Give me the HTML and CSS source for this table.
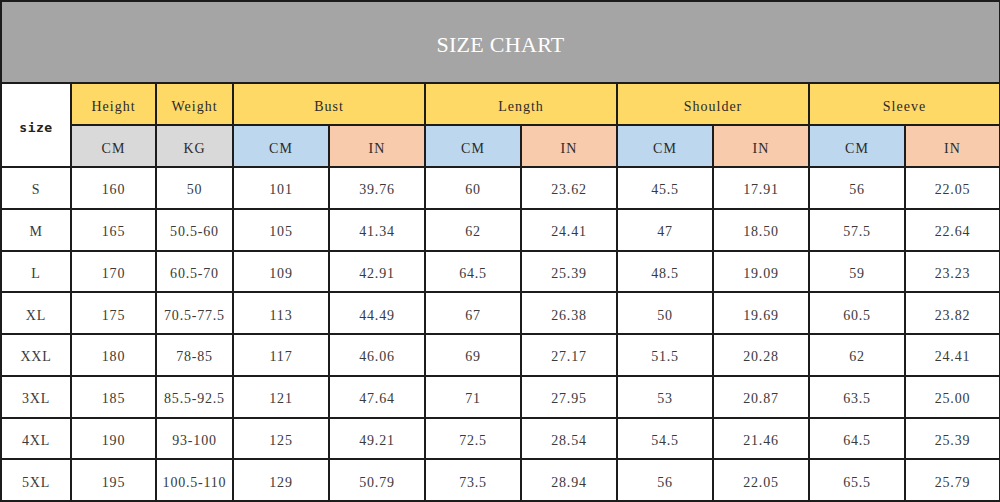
FILE: index.html
```html
<!DOCTYPE html>
<html>
<head>
<meta charset="utf-8">
<link rel="stylesheet" href="styles.css">
</head>
<body>
<div class="chart">
  <div class="title">SIZE CHART</div>

  <div class="size-head">size</div>
  <div class="h yellow">Height</div>
  <div class="h yellow">Weight</div>
  <div class="h yellow span2">Bust</div>
  <div class="h yellow span2">Length</div>
  <div class="h yellow span2">Shoulder</div>
  <div class="h yellow span2">Sleeve</div>

  <div class="h grey">CM</div>
  <div class="h grey">KG</div>
  <div class="h blue">CM</div><div class="h peach">IN</div>
  <div class="h blue">CM</div><div class="h peach">IN</div>
  <div class="h blue">CM</div><div class="h peach">IN</div>
  <div class="h blue">CM</div><div class="h peach">IN</div>

  <div class="c">S</div><div class="c">160</div><div class="c">50</div><div class="c">101</div><div class="c">39.76</div><div class="c">60</div><div class="c">23.62</div><div class="c">45.5</div><div class="c">17.91</div><div class="c">56</div><div class="c">22.05</div>
  <div class="c">M</div><div class="c">165</div><div class="c">50.5-60</div><div class="c">105</div><div class="c">41.34</div><div class="c">62</div><div class="c">24.41</div><div class="c">47</div><div class="c">18.50</div><div class="c">57.5</div><div class="c">22.64</div>
  <div class="c">L</div><div class="c">170</div><div class="c">60.5-70</div><div class="c">109</div><div class="c">42.91</div><div class="c">64.5</div><div class="c">25.39</div><div class="c">48.5</div><div class="c">19.09</div><div class="c">59</div><div class="c">23.23</div>
  <div class="c">XL</div><div class="c">175</div><div class="c">70.5-77.5</div><div class="c">113</div><div class="c">44.49</div><div class="c">67</div><div class="c">26.38</div><div class="c">50</div><div class="c">19.69</div><div class="c">60.5</div><div class="c">23.82</div>
  <div class="c">XXL</div><div class="c">180</div><div class="c">78-85</div><div class="c">117</div><div class="c">46.06</div><div class="c">69</div><div class="c">27.17</div><div class="c">51.5</div><div class="c">20.28</div><div class="c">62</div><div class="c">24.41</div>
  <div class="c">3XL</div><div class="c">185</div><div class="c">85.5-92.5</div><div class="c">121</div><div class="c">47.64</div><div class="c">71</div><div class="c">27.95</div><div class="c">53</div><div class="c">20.87</div><div class="c">63.5</div><div class="c">25.00</div>
  <div class="c">4XL</div><div class="c">190</div><div class="c">93-100</div><div class="c">125</div><div class="c">49.21</div><div class="c">72.5</div><div class="c">28.54</div><div class="c">54.5</div><div class="c">21.46</div><div class="c">64.5</div><div class="c">25.39</div>
  <div class="c">5XL</div><div class="c">195</div><div class="c">100.5-110</div><div class="c">129</div><div class="c">50.79</div><div class="c">73.5</div><div class="c">28.94</div><div class="c">56</div><div class="c">22.05</div><div class="c">65.5</div><div class="c">25.79</div>
</div>
</body>
</html>
```

FILE: styles.css
```css
html, body {
  margin: 0;
  padding: 0;
  background: #ffffff;
}

.chart {
  box-sizing: border-box;
  width: 1000px;
  height: 502px;
  padding: 2px 1px 2px 2px;
  background: #1c1c1c;
  display: grid;
  grid-template-columns: 68px 83px 75px 94px 94px 94px 94px 94px 94px 94px 93px;
  grid-template-rows: 80px 40px 40px repeat(8, 1fr);
  gap: 2px;
  font-family: "Liberation Serif", serif;
  font-size: 14px;
  color: #333333;
}

.chart > div {
  display: flex;
  align-items: center;
  justify-content: center;
  background: #ffffff;
  padding-top: 5px;
  box-sizing: border-box;
}

.title {
  grid-column: 1 / -1;
  background: #a5a5a5 !important;
  color: #ffffff;
  font-size: 22px;
  letter-spacing: 0.3px;
  padding-top: 6px !important;
}

.size-head {
  grid-row: span 2;
  font-family: "DejaVu Sans Mono", monospace;
  font-weight: bold;
  font-size: 13px;
  color: #222222;
  letter-spacing: 0.5px;
  padding-top: 5px !important;
}

.h {
  color: #2a2a2a;
  letter-spacing: 1px;
}

.span2 {
  grid-column: span 2;
}

.yellow { background: #ffd966 !important; }
.grey { background: #d9d9d9 !important; }
.blue { background: #bdd7ee !important; }
.peach { background: #f8cbad !important; }

.c {
  color: #3a3a3a;
  letter-spacing: 0.8px;
}
```
